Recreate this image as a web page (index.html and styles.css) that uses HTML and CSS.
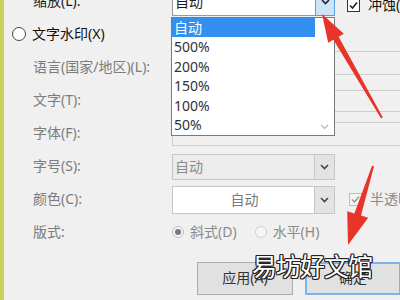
FILE: index.html
```html
<!DOCTYPE html>
<html lang="zh-CN">
<head>
    <meta charset="UTF-8">
    <meta name="viewport" content="width=device-width, initial-scale=1.0">
    <title>水印</title>
    <link rel="stylesheet" href="styles.css">
</head>
<body>

  <div class="dialog">
    <div class="form">
      <!-- 缩放 -->
      <div class="label label-on">缩放(L):</div>
      <div class="cell">
        <div class="combo combo-open">
          <span class="combo-text">自动</span>
          <span class="combo-btn">
            <svg width="9" height="6" viewBox="0 0 9 6"><path d="M1 1l3.5 3.5L8 1" fill="none" stroke="#222" stroke-width="1.6"/></svg>
          </span>
        </div>
        <div class="droplist">
          <ul class="options">
            <li class="sel">自动</li>
            <li>500%</li>
            <li>200%</li>
            <li>150%</li>
            <li>100%</li>
            <li>50%</li>
          </ul>
          <div class="scroll">
            <svg width="9" height="6" viewBox="0 0 9 6"><path d="M1 1l3.5 3.5L8 1" fill="none" stroke="#b5b5b5" stroke-width="1.2"/></svg>
          </div>
        </div>
      </div>
      <div class="check check-top">
        <span class="box">
          <svg width="11" height="11" viewBox="0 0 11 11"><path d="M2 5.5l2.5 2.5L9 2.5" fill="none" stroke="#222" stroke-width="1.6"/></svg>
        </span>
        冲蚀(W)
      </div>

      <!-- 文字水印 -->
      <div class="radio-row">
        <span class="radio"></span>
        <span class="underline-x">文字水印(X)</span>
      </div>

      <div class="label">语言(国家/地区)(L):</div>
      <div class="field field-top"></div>

      <div class="label">文字(T):</div>
      <div class="field field-text"></div>

      <div class="label">字体(F):</div>
      <div class="field"></div>

      <div class="label">字号(S):</div>
      <div class="combo">
        <span class="combo-text">自动</span>
        <span class="combo-btn">
          <svg width="9" height="6" viewBox="0 0 9 6"><path d="M1 1l3.5 3.5L8 1" fill="none" stroke="#444" stroke-width="1.6"/></svg>
        </span>
      </div>
      <div></div>

      <div class="label">颜色(C):</div>
      <div class="combo combo-color">
        <span class="combo-text">自动</span>
        <span class="combo-btn">
          <svg width="9" height="6" viewBox="0 0 9 6"><path d="M1 1l3.5 3.5L8 1" fill="none" stroke="#444" stroke-width="1.6"/></svg>
        </span>
      </div>
      <div class="check check-off">
        <span class="box">
          <svg width="11" height="11" viewBox="0 0 11 11"><path d="M2 5.5l2.5 2.5L9 2.5" fill="none" stroke="#999" stroke-width="1.4"/></svg>
        </span>
        半透明
      </div>

      <div class="label">版式:</div>
      <div class="layout">
        <span class="opt"><span class="radio radio-off radio-dot"></span>斜式(D)</span>
        <span class="opt"><span class="radio radio-off"></span>水平(H)</span>
      </div>

      <div class="actions">
        <button type="button" class="btn">应用(A)</button>
        <button type="button" class="btn btn-primary">确定</button>
      </div>
    </div>
  </div>

  <svg class="arrows" width="400" height="300" viewBox="0 0 400 300">
    <polygon points="322,14 328.2,42.7 333.4,39.7 381.1,118.5 382.9,117.5 338.6,36.7 343.8,33.7" fill="#e8352b"/>
    <polygon points="348,245 368.2,217.8 361,215.6 374,166.3 372,165.7 354.4,213.4 347.2,211.2" fill="#e8352b"/>
  </svg>

  <div class="watermark">易坊好文馆</div>

</body>
</html>
```

FILE: styles.css
```css
* {
    box-sizing: border-box;
}

body {
    position: relative;
    margin: 0;
    width: 400px;
    height: 300px;
    overflow: hidden;
    background: #f0f0f0;
    font-family: "Noto Sans", "Noto Sans CJK SC", sans-serif;
    font-size: 14px;
    line-height: 1.2;
    color: #222;
}

.dialog {
    height: 300px;
    overflow: hidden;
    border-left: 4px solid #c9d25c;
    padding-left: 29px;
}

.form {
    display: grid;
    grid-template-columns: 139px 163px 1fr;
    grid-template-rows: repeat(8, 33px) 46px;
    align-items: center;
    margin-top: -15px;
}

.label {
    color: #7c7c7c;
    white-space: nowrap;
}

.label-on {
    color: #1a1a1a;
}

.cell {
    position: relative;
}

/* combo boxes */
.combo {
    display: flex;
    height: 26px;
    border: 1px solid #c6c6c6;
    background: #ececec;
}

.combo-text {
    flex: 1;
    padding-left: 2px;
    line-height: 24px;
    color: #8a8a8a;
}

.combo-btn {
    width: 20px;
    display: flex;
    align-items: center;
    justify-content: center;
    border-left: 1px solid #c6c6c6;
    background: #e3e3e3;
}

.combo-open {
    height: 28px;
    background: #fff;
    border-color: #9a9a9a;
}

.combo-open .combo-text {
    line-height: 26px;
    color: #1a1a1a;
}

.combo-open .combo-btn {
    background: #cce4f7;
    border: 1px solid #569de5;
    margin: -1px -1px -1px 0;
}

.combo-color {
    height: 28px;
    background: #fff;
}

.combo-color .combo-text {
    text-align: center;
    line-height: 26px;
    color: #7a7a7a;
}

/* open list */
.droplist {
    position: absolute;
    left: -1px;
    top: calc(100% + 1px);
    width: 164px;
    height: 119px;
    display: flex;
    border: 1px solid #7a7a7a;
    background: #fff;
    z-index: 2;
}

.options {
    flex: 1;
    margin: 0;
    padding: 0;
    list-style: none;
}

.options li {
    height: 19.5px;
    line-height: 19.5px;
    padding-left: 2px;
    color: #333;
}

.options .sel {
    background: #3390f0;
    color: #fff;
}

.scroll {
    width: 19px;
    display: flex;
    align-items: flex-end;
    justify-content: center;
    padding-bottom: 5px;
}

/* disabled text fields */
.field {
    grid-column: 2 / -1;
    width: 240px;
    height: 24px;
    border: 1px solid #cdcdcd;
    background: #f0f0f0;
}

.field-top {
    align-self: start;
}

.field-text {
    height: 22px;
}

/* checkboxes */
.check {
    display: flex;
    align-items: center;
    gap: 8px;
    margin-left: 12px;
    color: #111;
    white-space: nowrap;
}

.check-top {
    margin-top: 8px;
}

.check-off {
    margin-left: 14px;
    color: #8a8a8a;
}

.box {
    width: 13px;
    height: 13px;
    display: flex;
    align-items: center;
    justify-content: center;
    border: 1px solid #333;
    background: #fff;
}

.check-off .box {
    border-color: #bdbdbd;
    background: #f4f4f4;
}

/* radios */
.radio-row {
    grid-column: 1 / -1;
    display: flex;
    align-items: center;
    gap: 6px;
    margin-left: -21px;
    color: #111;
}

.radio {
    width: 14px;
    height: 14px;
    border: 1px solid #444;
    border-radius: 50%;
    background: #fff;
}

.layout {
    grid-column: 2 / -1;
    display: flex;
    gap: 18px;
    color: #8a8a8a;
}

.opt {
    display: flex;
    align-items: center;
    gap: 6px;
    white-space: nowrap;
}

.radio-off {
    width: 12px;
    height: 12px;
    border-color: #d0d0d0;
    background: #f6f6f6;
    display: flex;
    align-items: center;
    justify-content: center;
}

.radio-dot {
    border-color: #bdbdbd;
}

.radio-dot::after {
    content: "";
    width: 6px;
    height: 6px;
    border-radius: 50%;
    background: #7a7a7a;
}

/* buttons */
.actions {
    grid-column: 2 / -1;
    align-self: end;
    display: flex;
    gap: 12px;
    margin-left: 25px;
}

.btn {
    width: 96px;
    height: 33px;
    flex-shrink: 0;
    border: 1px solid #adadad;
    background: #e1e1e1;
    color: #333;
    font: inherit;
    padding: 0;
}

.btn-primary {
    border: 2px solid #7db3ea;
}

/* overlays */
.arrows {
    position: absolute;
    left: 0;
    top: 0;
    pointer-events: none;
    z-index: 5;
}

.watermark {
    position: absolute;
    left: 252px;
    top: 254px;
    font-size: 25px;
    line-height: 1;
    letter-spacing: -1px;
    color: #fff;
    z-index: 6;
    text-shadow: 1px 1px 0 #222, -1px -1px 0 #222, 1px -1px 0 #222, -1px 1px 0 #222,
                 0 1px 0 #222, 1px 0 0 #222, -1px 0 0 #222, 0 -1px 0 #222;
}
```
